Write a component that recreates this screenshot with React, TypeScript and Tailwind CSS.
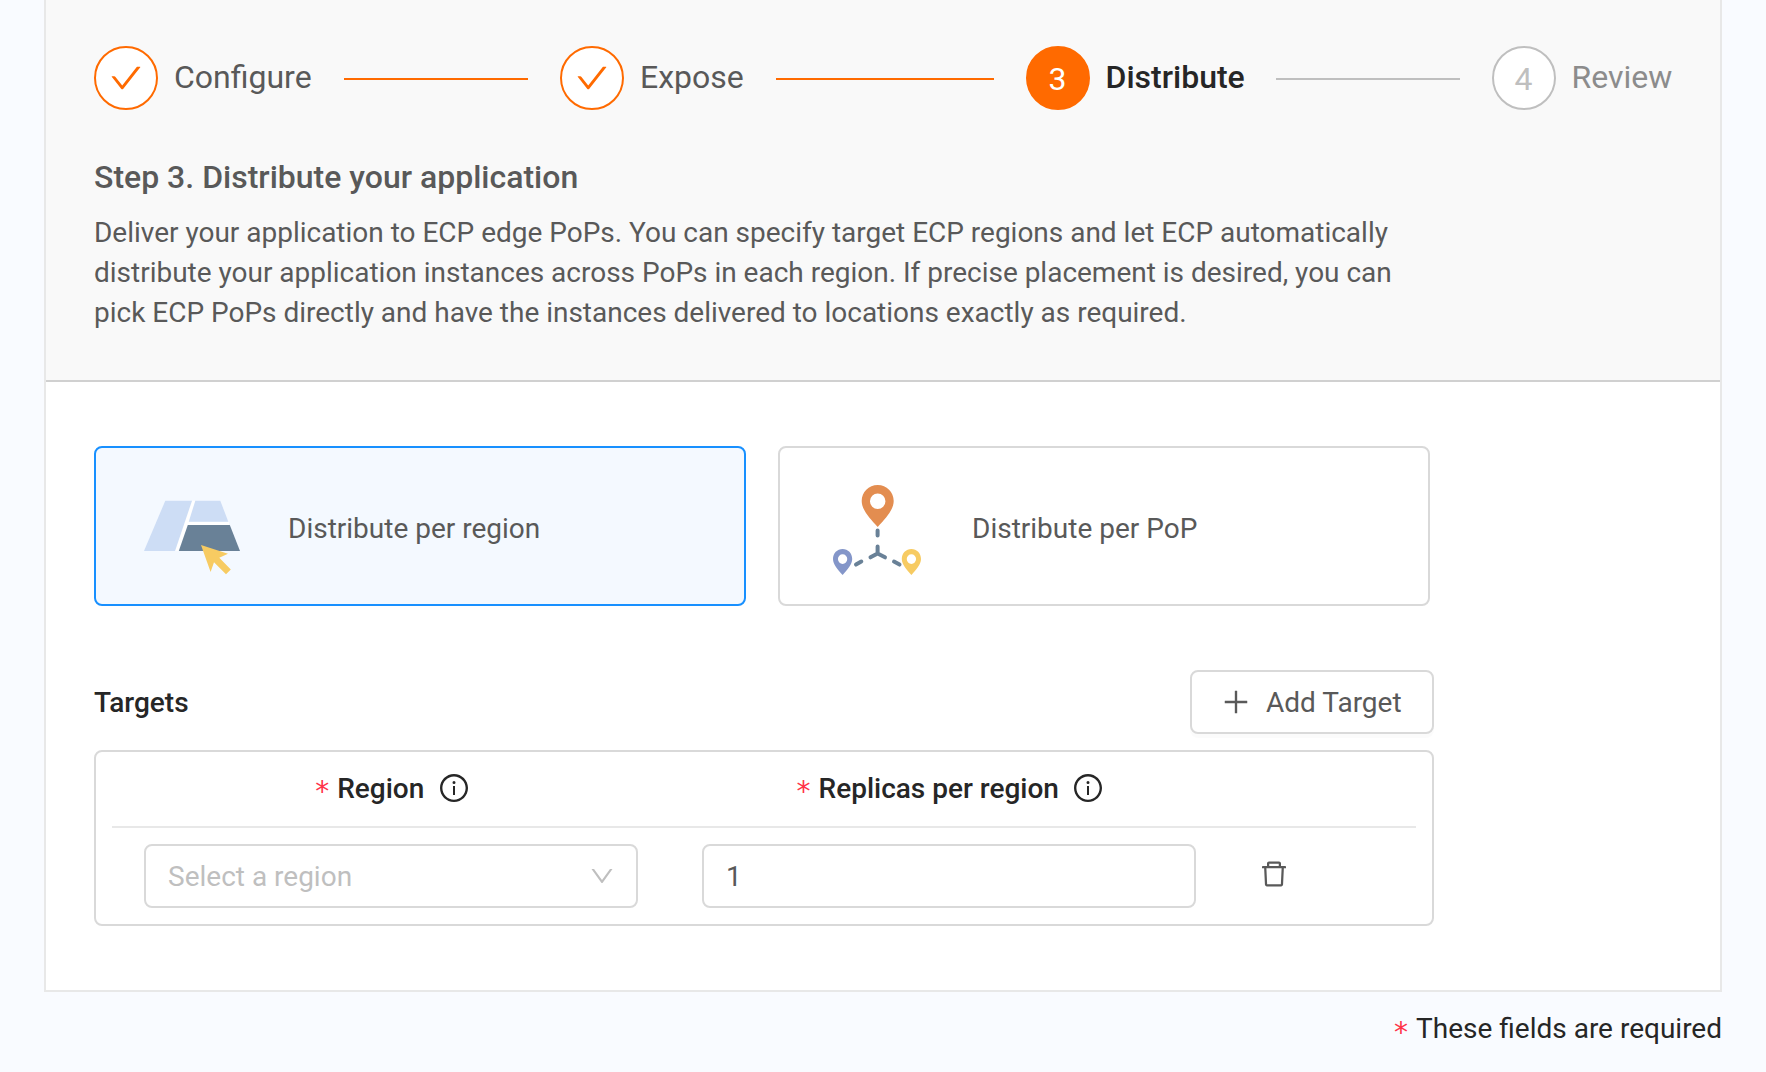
import type { ReactNode } from "react";
import {
  AiOutlineCheck,
  AiOutlineDelete,
  AiOutlineDown,
  AiOutlineInfoCircle,
  AiOutlinePlus,
} from "react-icons/ai";

type StepState = "done" | "active" | "pending";

const circleStyles: Record<StepState, string> = {
  done: "border-[#ff6a00] bg-white text-[#ff6a00]",
  active: "border-[#ff6a00] bg-[#ff6a00] text-white",
  pending: "border-[#bfbfbf] bg-white text-[#bfbfbf]",
};

const labelStyles: Record<StepState, string> = {
  done: "ml-4 text-[#595959]",
  active: "ml-[15.5px] -mr-px font-medium text-[#262626]",
  pending: "ml-[15.5px] text-[#8c8c8c]",
};

function Step({ index, label, state, last }: { index: number; label: string; state: StepState; last?: boolean }) {
  return (
    <li className={last ? "flex shrink-0 items-center" : "flex w-[466px] shrink-0 items-center pr-8"}>
      <span className={`flex size-16 shrink-0 items-center justify-center rounded-full border-2 text-[32px] ${circleStyles[state]}`}>
        {state === "done" ? <AiOutlineCheck size={36} /> : <span className="pt-0.5 pr-px">{index}</span>}
      </span>
      <span className={`pb-0.5 text-[32px] leading-[62px] ${labelStyles[state]}`}>{label}</span>
      {!last && <span className={`mt-0.5 ml-8 h-0.5 flex-1 ${state === "done" ? "bg-[#ff6a00]" : "bg-[#bfbfbf]"}`} />}
    </li>
  );
}

function Asterisk() {
  return (
    <span className="mr-2 pt-1.5 font-['DejaVu_Sans',sans-serif] text-[28px] leading-9 text-[#ff3348]">
      *
    </span>
  );
}

function RegionIcon() {
  return (
    <svg width="96" height="75" viewBox="0 0 96 75" className="mt-[22px]">
      <path d="M48 0.7H51.5L44.7 22H85V25.5H43.5L35 51H31Z" fill="#fff" />
      <path d="M21.3 0.7H48L31 51H0Z" fill="#cdddf5" />
      <path d="M51.3 0.7H76.3L84.3 21.7H44.8Z" fill="#cdddf5" />
      <path d="M43.8 25H85.8L96 51H34.8Z" fill="#698197" />
      <path d="M57 45L84 53.8L75.3 57.8L86.8 69.5L82 74.2L70 62.3L66.6 72Z" fill="#f7cb62" />
    </svg>
  );
}

function Pin({ transform, fill }: { transform: string; fill: string }) {
  return (
    <path
      transform={transform}
      fill={fill}
      fillRule="evenodd"
      d="M16 0C7 0 0 7 0 16C0 25 8 33 16 42C24 33 32 25 32 16C32 7 25 0 16 0ZM16 8.5A7.7 7.7 0 1 1 16 24A7.7 7.7 0 1 1 16 8.5Z"
    />
  );
}

function PopIcon() {
  return (
    <svg width="90" height="92" viewBox="0 0 90 92" className="mt-2 ml-[5px]">
      <Pin transform="translate(28.7 1)" fill="#e38d50" />
      <Pin transform="translate(0 65) scale(0.6 0.62)" fill="#8496c9" />
      <Pin transform="translate(68.8 65) scale(0.6 0.62)" fill="#f7cb62" />
      <path
        d="M44.6 46.5V51.5M44.6 62.5V69.5L37.5 73.3M44.6 69.5L52 73.3M28.3 77.6L23 80.6M61 77.6L66.5 80.6"
        fill="none"
        stroke="#698197"
        strokeWidth="4"
        strokeLinecap="round"
        strokeLinejoin="round"
      />
    </svg>
  );
}

function ModeCard({ selected, icon, label }: { selected?: boolean; icon: ReactNode; label: string }) {
  return (
    <div
      className={`flex h-40 w-[652px] items-center rounded-lg border-2 ${
        selected ? "border-[#1890ff] bg-[#f4f9ff]" : "border-[#d9d9d9] bg-white"
      }`}
    >
      <div className="flex w-[192px] items-center pl-12">{icon}</div>
      <span className="pt-1.5">{label}</span>
    </div>
  );
}

function ColumnTitle({ children }: { children: ReactNode }) {
  return (
    <div className="flex items-center justify-center pl-[3px] font-medium text-[#262626]">
      <Asterisk />
      {children}
      <AiOutlineInfoCircle size={32} className="mb-0.5 ml-[13.5px]" />
    </div>
  );
}

export default function App() {
  return (
    <div className="h-[1072px] overflow-hidden bg-[#f9fbff] px-11 font-[Roboto,sans-serif] text-[28px] leading-10 text-[#595959]">
      <main className="h-[992px] border-x-2 border-b-2 border-[#e8e8e8] bg-white">
        <header className="h-[382px] border-b-2 border-[#d0d0d0] bg-[#f9f9f9] px-12 pt-[46px]">
          <ol className="flex">
            <Step index={1} label="Configure" state="done" />
            <Step index={2} label="Expose" state="done" />
            <Step index={3} label="Distribute" state="active" />
            <Step index={4} label="Review" state="pending" last />
          </ol>
          <h2 className="mt-[43px] text-[32px] leading-12 font-medium">Step 3. Distribute your application</h2>
          <p className="mt-3 w-[1340px] tracking-[-0.01px]">
            Deliver your application to ECP edge PoPs. You can specify target ECP regions and let ECP automatically
            distribute your application instances across PoPs in each region. If precise placement is desired, you can
            pick ECP PoPs directly and have the instances delivered to locations exactly as required.
          </p>
        </header>

        <section className="px-12 pt-16">
          <div className="flex gap-8">
            <ModeCard selected icon={<RegionIcon />} label="Distribute per region" />
            <ModeCard icon={<PopIcon />} label="Distribute per PoP" />
          </div>

          <div className="mt-16 flex w-[1340px] items-center justify-between">
            <h3 className="pt-0.5 font-medium text-[#262626]">Targets</h3>
            <button className="flex h-16 w-[244px] items-center rounded-lg border-2 border-[#d9d9d9] bg-white pl-7 shadow-[0_4px_0_rgba(0,0,0,0.016)]">
              <AiOutlinePlus size={32} />
              <span className="ml-3.5 pt-0.5">Add Target</span>
            </button>
          </div>

          <div className="mt-4 h-44 w-[1340px] rounded-lg border-2 border-[#d9d9d9] px-4">
            <div className="grid h-[76px] grid-cols-[558px_558px_188px] items-center border-b-2 border-[#e8e8e8]">
              <ColumnTitle>Region</ColumnTitle>
              <ColumnTitle>Replicas per region</ColumnTitle>
            </div>
            <div className="grid grid-cols-[558px_558px_188px] items-center pt-4">
              <div className="mx-8 flex h-16 items-center justify-between rounded-lg border-2 border-[#d9d9d9] pr-5 pl-[22px] text-[#bfbfbf]">
                <span className="pt-0.5">Select a region</span>
                <AiOutlineDown size={28} />
              </div>
              <div className="mx-8 flex h-16 items-center rounded-lg border-2 border-[#d9d9d9] px-[22px] pt-0.5">1</div>
              <AiOutlineDelete size={32} className="mb-1 ml-[30px]" />
            </div>
          </div>
        </section>
      </main>
      <footer className="flex justify-end pt-[17px] text-[#262626]">
        <Asterisk />
        These fields are required
      </footer>
    </div>
  );
}
